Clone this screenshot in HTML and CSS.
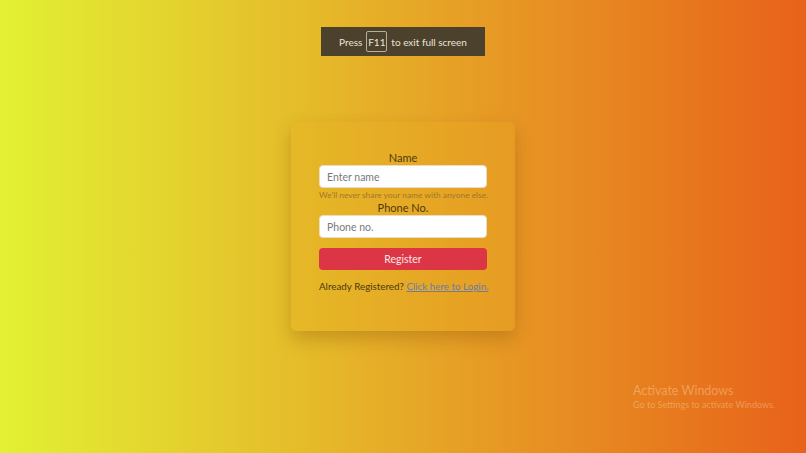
FILE: index.html
```html
<!DOCTYPE html>
<html lang="en">
<head>
<meta charset="utf-8">
<title>Register</title>
<link rel="stylesheet" href="styles.css">
</head>
<body>
<div class="fs-banner">Press <span class="key">F11</span> to exit full screen</div>
<main class="page">
  <form class="card">
    <label class="label" for="name">Name</label>
    <input class="input" id="name" type="text" placeholder="Enter name">
    <div class="help">We'll never share your name with anyone else.</div>
    <label class="label" for="phone">Phone No.</label>
    <input class="input" id="phone" type="text" placeholder="Phone no.">
    <button class="btn" type="button">Register</button>
    <p class="login">Already Registered? <a href="#">Click here to Login.</a></p>
  </form>
</main>
<div class="watermark">
  <div class="wm-title">Activate Windows</div>
  <div class="wm-sub">Go to Settings to activate Windows.</div>
</div>
</body>
</html>
```
FILE: styles.css
```css
html, body {
  margin: 0;
  height: 100%;
}
body {
  font-family: Lato, "Open Sans", sans-serif;
  background: linear-gradient(to right, #e2f133 0%, #e6aa27 50%, #e8621a 100%);
  overflow: hidden;
  position: relative;
}
.page {
  display: flex;
  justify-content: center;
  padding-top: 122px;
}
.card {
  width: 168px;
  padding: 29px 28px 38px;
  border-radius: 5px;
  background: rgba(230, 170, 30, 0.25);
  box-shadow: 0 8px 18px rgba(120, 60, 0, 0.28);
  display: flex;
  flex-direction: column;
  align-items: stretch;
}
.label {
  text-align: center;
  font-size: 11px;
  line-height: 14px;
  color: #4d3a0c;
}
.input {
  box-sizing: border-box;
  height: 23px;
  margin: 0;
  padding: 0 7px;
  border: 1px solid #e9dcc0;
  border-radius: 4px;
  background: #fff;
  font-family: inherit;
  font-size: 10.5px;
  color: #333;
  outline: none;
}
.input::placeholder {
  color: #7a7a7a;
}
.help {
  margin-top: 2px;
  font-size: 8.4px;
  line-height: 11px;
  color: #a0782c;
  white-space: nowrap;
  text-align: center;
}
.btn {
  margin-top: 10px;
  height: 22px;
  border: 0;
  border-radius: 4px;
  background: #dc3646;
  color: #fbe6e6;
  font-family: inherit;
  font-size: 10.5px;
  padding: 0;
}
.login {
  margin: 9px 0 0;
  font-size: 9.8px;
  line-height: 14px;
  text-align: center;
  color: #4a3a10;
  white-space: nowrap;
}
.login a {
  color: #6a7ca6;
  text-decoration: underline;
}
.fs-banner {
  position: absolute;
  top: 27px;
  left: 321px;
  width: 164px;
  height: 29px;
  box-sizing: border-box;
  background: #4b412c;
  color: #ece4d6;
  font-size: 10px;
  display: flex;
  align-items: center;
  justify-content: center;
  gap: 4px;
}
.key {
  display: inline-flex;
  align-items: center;
  justify-content: center;
  width: 21px;
  height: 21px;
  box-sizing: border-box;
  border: 1px solid #b7ad98;
  border-radius: 2px;
  font-size: 10px;
}
.watermark {
  position: absolute;
  left: 633px;
  top: 383px;
  color: rgba(255, 235, 200, 0.35);
}
.wm-title {
  font-size: 12.5px;
  line-height: 15px;
}
.wm-sub {
  font-size: 9px;
  line-height: 12px;
  margin-top: 1px;
}
```
